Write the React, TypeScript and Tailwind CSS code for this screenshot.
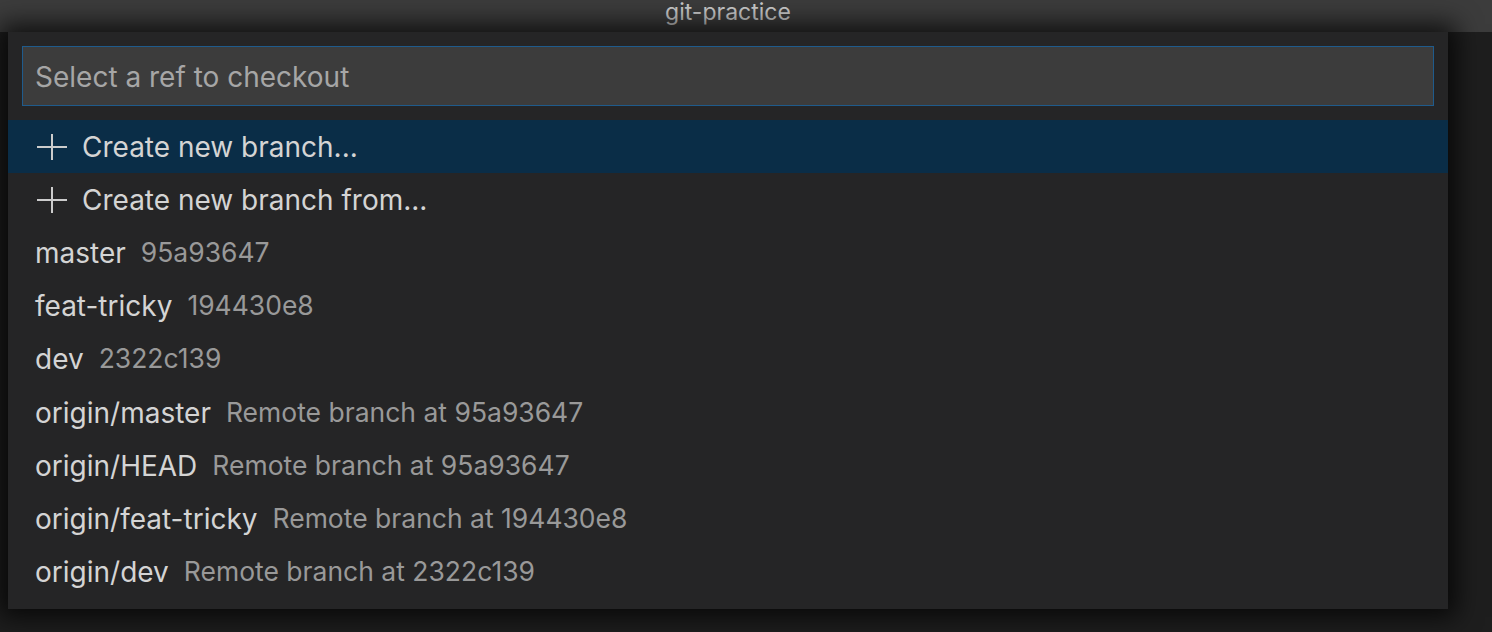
import React from "react";

const items: { label: string; desc: string }[] = [
  { label: "master", desc: "95a93647" },
  { label: "feat-tricky", desc: "194430e8" },
  { label: "dev", desc: "2322c139" },
  { label: "origin/master", desc: "Remote branch at 95a93647" },
  { label: "origin/HEAD", desc: "Remote branch at 95a93647" },
  { label: "origin/feat-tricky", desc: "Remote branch at 194430e8" },
  { label: "origin/dev", desc: "Remote branch at 2322c139" },
];

function Plus() {
  return (
    <svg width="32" height="30" viewBox="0 0 32 30" className="shrink-0">
      <path d="M16 2v26M1 15h30" stroke="#cccccc" strokeWidth="2" fill="none" />
    </svg>
  );
}

export default function App() {
  return (
    <div
      className="w-[1492px] h-[632px] overflow-hidden bg-[#1e1e1e] flex flex-col"
      style={{ fontFamily: "Inter, 'Noto Sans', sans-serif" }}
    >
      <div className="h-[32px] bg-[#3c3c3c] flex items-start justify-center text-[23px] text-[#cccccc] leading-[25px] pr-[36px]">
        git-practice
      </div>
      <div className="flex-1 flex pl-[8px] bg-[#1e1e1e]">
        <div className="w-[1440px] h-[577px] bg-[#252526] shadow-[0_0_24px_8px_rgba(0,0,0,0.75)] flex flex-col pt-[14px]">
          <div className="mx-[14px] h-[60px] border border-[#1f5b8c] bg-[#3c3c3c] flex items-center pl-[12px] pt-[2px] text-[28px] text-[#a6a6a6]">
            Select a ref to checkout
          </div>
          <div className="mt-[14px] flex flex-col">
            <div className="h-[53.2px] bg-[#0a2d47] flex items-center pl-[28px] gap-[14px] text-[28px] text-[#d4d4d4]">
              <Plus />
              <span>Create new branch...</span>
            </div>
            <div className="h-[53.2px] flex items-center pl-[28px] gap-[14px] text-[28px] text-[#d4d4d4]">
              <Plus />
              <span>Create new branch from...</span>
            </div>
            {items.map((it) => (
              <div
                key={it.label}
                className="h-[53.2px] flex items-center pl-[27px] gap-[15px]"
              >
                <span className="text-[28px] text-[#d4d4d4]">{it.label}</span>
                <span className="text-[26.5px] text-[#999999]">{it.desc}</span>
              </div>
            ))}
          </div>
        </div>
      </div>
    </div>
  );
}
